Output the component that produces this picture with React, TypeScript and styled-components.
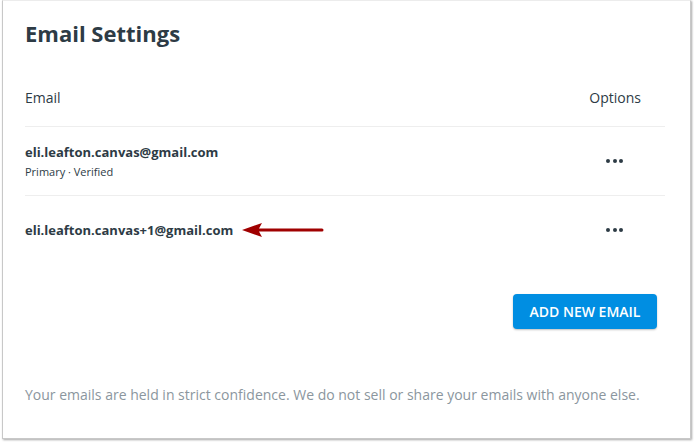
import React from 'react';
import styled, { createGlobalStyle } from 'styled-components';

const GlobalStyle = createGlobalStyle`
  html, body {
    margin: 0;
    padding: 0;
    background: #ffffff;
  }
  body {
    font-family: "Open Sans", Lato, sans-serif;
    color: #2d3b45;
  }
`;

const Page = styled.div`
  width: 694px;
  height: 442px;
  padding: 0 3px 3px 2px;
  box-sizing: border-box;
  background: #ffffff;
`;

const Card = styled.div`
  height: 439px;
  box-sizing: border-box;
  border: 1px solid #c8c8c8;
  border-top-color: #ececec;
  box-shadow: 1px 1px 2px rgba(0, 0, 0, 0.35);
  padding: 18px 25px 0 22px;
  display: flex;
  flex-direction: column;
`;

const Title = styled.h1`
  margin: 0;
  font-size: 22px;
  font-weight: 700;
  line-height: 28px;
  color: #2d3b45;
`;

const Table = styled.div`
  margin-top: 35px;
  display: flex;
  flex-direction: column;
`;

const HeaderRow = styled.div`
  display: flex;
  justify-content: space-between;
  align-items: center;
  height: 30px;
  padding-bottom: 14px;
  border-bottom: 1px solid #eeeeee;
  font-size: 14px;
  color: #2d3b45;
`;

const HeaderCell = styled.span<{ $right?: boolean }>`
  padding-right: ${p => (p.$right ? '24px' : '0')};
`;

const Row = styled.div<{ $last?: boolean }>`
  display: flex;
  justify-content: space-between;
  align-items: center;
  height: ${p => (p.$last ? '67px' : '68px')};
  border-bottom: ${p => (p.$last ? 'none' : '1px solid #eeeeee')};
`;

const EmailCell = styled.div`
  display: flex;
  flex-direction: column;
  gap: 3px;
`;

const EmailLine = styled.div`
  display: flex;
  align-items: center;
  gap: 9px;
`;

const Address = styled.span`
  font-size: 13px;
  font-weight: 700;
  color: #2d3b45;
`;

const Meta = styled.span`
  font-size: 11px;
  color: #2d3b45;
`;

const OptionsButton = styled.button`
  border: none;
  background: none;
  padding: 0;
  margin-right: 42px;
  width: 17px;
  height: 10px;
  display: flex;
  align-items: center;
  justify-content: space-between;
  cursor: pointer;
`;

const Dot = styled.span`
  width: 4px;
  height: 4px;
  border-radius: 50%;
  background: #2d3b45;
`;

const Actions = styled.div`
  display: flex;
  justify-content: flex-end;
  margin-top: 31px;
  padding-right: 8px;
`;

const AddButton = styled.button`
  background: #008ee2;
  color: #ffffff;
  border: none;
  border-radius: 4px;
  height: 35px;
  width: 144px;
  padding: 0;
  font-family: "Open Sans", Lato, sans-serif;
  font-size: 14px;
  font-weight: 600;
  box-shadow: 0 1px 2px rgba(0, 0, 0, 0.25);
  cursor: pointer;
`;

const Footer = styled.p`
  margin: 56px 0 0;
  font-size: 14px;
  color: #8b969e;
`;

const Arrow = () => (
  <svg width="82" height="14" viewBox="0 0 82 14">
    <path d="M0 7 L20 0 L17 5.5 L80 5.5 A1.5 1.5 0 0 1 80 8.5 L17 8.5 L20 14 Z" fill="#a00000" />
  </svg>
);

const Dots = () => (
  <OptionsButton aria-label="Options">
    <Dot />
    <Dot />
    <Dot />
  </OptionsButton>
);

const App: React.FC = () => (
  <>
    <GlobalStyle />
    <Page>
      <Card>
        <Title>Email Settings</Title>
        <Table>
          <HeaderRow>
            <HeaderCell>Email</HeaderCell>
            <HeaderCell $right>Options</HeaderCell>
          </HeaderRow>
          <Row>
            <EmailCell>
              <Address>eli.leafton.canvas@gmail.com</Address>
              <Meta>Primary · Verified</Meta>
            </EmailCell>
            <Dots />
          </Row>
          <Row $last>
            <EmailLine>
              <Address>eli.leafton.canvas+1@gmail.com</Address>
              <Arrow />
            </EmailLine>
            <Dots />
          </Row>
        </Table>
        <Actions>
          <AddButton>ADD NEW EMAIL</AddButton>
        </Actions>
        <Footer>
          Your emails are held in strict confidence. We do not sell or share your emails with anyone else.
        </Footer>
      </Card>
    </Page>
  </>
);

export default App;
